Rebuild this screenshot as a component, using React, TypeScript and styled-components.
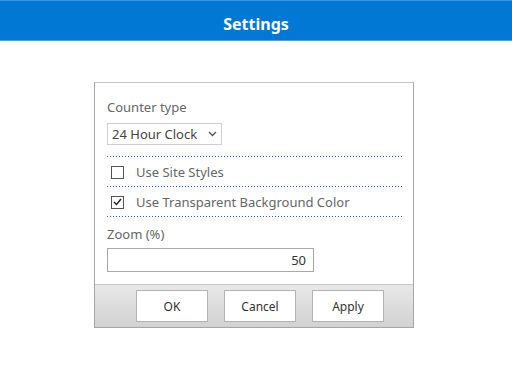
import React from "react";
import styled, { createGlobalStyle } from "styled-components";

const GlobalStyle = createGlobalStyle`
  html, body {
    margin: 0;
    padding: 0;
    background: #ffffff;
    font-family: "Noto Sans", "Open Sans", sans-serif;
  }
`;

const Page = styled.div`
  width: 512px;
  height: 384px;
  overflow: hidden;
`;

const Header = styled.header`
  height: 41px;
  background: #0078d4;
  border-top: 1px solid #3a94dd;
  border-bottom: 1px solid #4a9ee0;
  box-sizing: border-box;
  display: flex;
  align-items: center;
  justify-content: center;
  color: #ffffff;
  font-size: 16px;
  font-weight: 700;
  padding-top: 6px;
`;

const Panel = styled.div`
  width: 320px;
  margin: 41px 0 0 94px;
  box-sizing: border-box;
  border: 1px solid #a6a6a6;
  border-top-color: #c4c4c4;
  background: #ffffff;
`;

const Body = styled.div`
  padding: 15px 12px 12px 12px;
  display: flex;
  flex-direction: column;
`;

const Label = styled.div<{ $gap?: number }>`
  margin-top: ${(p) => p.$gap ?? 0}px;
  font-size: 13px;
  color: #666666;
  line-height: 18px;
  height: 18px;
`;

const Select = styled.div`
  margin-top: 7px;
  width: 115px;
  height: 22px;
  box-sizing: border-box;
  border: 1px solid #cfcfcf;
  display: flex;
  align-items: center;
  justify-content: space-between;
  padding: 0 4px 0 4px;
  font-size: 13px;
  color: #444444;
`;

const Divider = styled.div<{ $gap?: number }>`
  margin-top: ${(p) => p.$gap ?? 0}px;
  height: 1px;
  width: 295px;
  background: repeating-linear-gradient(
    to right,
    #2f62d0 0 1px,
    transparent 1px 3px
  );
`;

const CheckRow = styled.div`
  height: 29px;
  display: flex;
  align-items: center;
  padding-left: 4px;
  padding-top: 1px;
  box-sizing: border-box;
  gap: 12px;
  font-size: 13px;
  color: #666666;
`;

const Box = styled.span`
  width: 13px;
  height: 13px;
  box-sizing: border-box;
  border: 1px solid #555555;
  display: inline-flex;
  align-items: center;
  justify-content: center;
  background: #ffffff;
`;

const NumberInput = styled.div`
  margin-top: 5px;
  width: 207px;
  height: 24px;
  box-sizing: border-box;
  border: 1px solid #a9a9a9;
  display: flex;
  align-items: center;
  justify-content: flex-end;
  padding-right: 7px;
  font-size: 13px;
  color: #333333;
`;

const Footer = styled.div`
  height: 43px;
  box-sizing: border-box;
  border-top: 1px solid #c8c8c8;
  background: linear-gradient(#e8e8e8, #d2d2d2);
  display: flex;
  align-items: center;
  padding-left: 41px;
  gap: 16px;
`;

const Button = styled.button`
  width: 72px;
  height: 32px;
  box-sizing: border-box;
  border: 1px solid #b3b3b3;
  background: #ffffff;
  font-family: inherit;
  font-size: 12px;
  color: #333333;
  padding: 0;
`;

const Chevron = () => (
  <svg width="9" height="6" viewBox="0 0 9 6">
    <path d="M1 1l3.5 3.5L8 1" fill="none" stroke="#555" strokeWidth="1.3" />
  </svg>
);

const Check = ({ checked }: { checked?: boolean }) => (
  <Box>
    {checked && (
      <svg width="9" height="8" viewBox="0 0 9 8">
        <path d="M1 4l2.5 2.5L8 1" fill="none" stroke="#222" strokeWidth="1.4" />
      </svg>
    )}
  </Box>
);

export default function App() {
  return (
    <Page>
      <GlobalStyle />
      <Header>Settings</Header>
      <Panel>
        <Body>
          <Label>Counter type</Label>
          <Select>
            <span>24 Hour Clock</span>
            <Chevron />
          </Select>
          <Divider $gap={11} />
          <CheckRow>
            <Check />
            <span>Use Site Styles</span>
          </CheckRow>
          <Divider />
          <CheckRow>
            <Check checked />
            <span>Use Transparent Background Color</span>
          </CheckRow>
          <Divider />
          <Label $gap={8}>Zoom (%)</Label>
          <NumberInput>50</NumberInput>
        </Body>
        <Footer>
          <Button>OK</Button>
          <Button>Cancel</Button>
          <Button>Apply</Button>
        </Footer>
      </Panel>
    </Page>
  );
}
